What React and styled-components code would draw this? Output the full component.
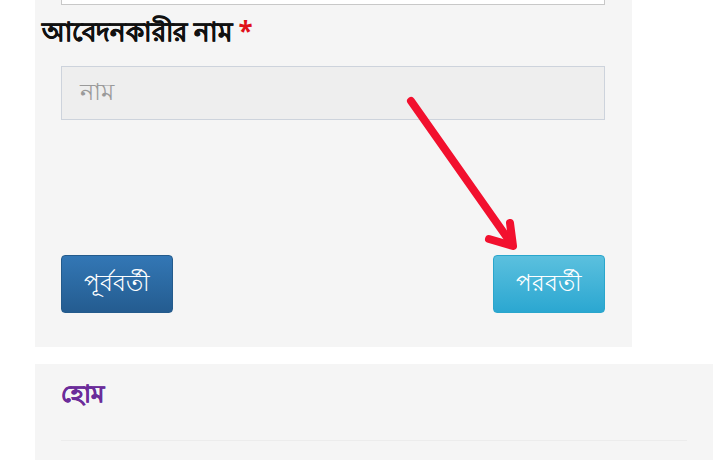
import React from "react";
import styled, { createGlobalStyle } from "styled-components";

const Global = createGlobalStyle`
  html, body { margin: 0; padding: 0; background: #fff; }
  body { font-family: "Noto Sans", "DejaVu Sans", sans-serif; width: 720px; height: 460px; overflow: hidden; }
`;

const Page = styled.div`
  position: relative;
  width: 720px;
  height: 460px;
  overflow: hidden;
  display: flex;
  flex-direction: column;
  gap: 17px;
`;

const FormPanel = styled.div`
  margin-left: 35px;
  width: 597px;
  height: 347px;
  background: #f5f5f5;
  box-sizing: border-box;
  padding: 0 27px 0 26px;
  display: flex;
  flex-direction: column;
`;

const TopInput = styled.div`
  height: 6px;
  margin-top: -1px;
  background: #fff;
  border: 1px solid #c8c8c8;
  border-top: none;
  box-sizing: border-box;
`;

const Label = styled.div`
  margin: 12px 0 0 -19px;
  font-size: 26px;
  font-weight: 700;
  color: #111;
  line-height: 28px;
  -webkit-text-stroke: 0.4px #111;
  & span { color: #e0101a; -webkit-text-stroke: 0; }
`;

const NameInput = styled.div`
  margin-top: 21px;
  height: 54px;
  box-sizing: border-box;
  background: #eeeeee;
  border: 1px solid #cdd3dc;
  padding: 0 18px;
  display: flex;
  align-items: center;
  font-size: 24px;
  color: #9a9a9a;
`;

const Buttons = styled.div`
  margin-top: 135px;
  display: flex;
  justify-content: space-between;
`;

const Btn = styled.div`
  width: 112px;
  height: 58px;
  box-sizing: border-box;
  border-radius: 4px;
  display: flex;
  align-items: center;
  justify-content: center;
  color: #fff;
  font-size: 23px;
  border: 1px solid ${p => (p.$variant === "info" ? "#2aa6cc" : "#245b8c")};
  background: ${p =>
    p.$variant === "info"
      ? "linear-gradient(#5bc0de, #2ba7d1)"
      : "linear-gradient(#3377b5, #245c90)"};
`;

const MenuPanel = styled.div`
  margin-left: 35px;
  width: 678px;
  flex: 1;
  background: #f5f5f5;
  box-sizing: border-box;
  padding: 15px 26px 0 26px;
`;

const MenuItem = styled.div`
  font-size: 24px;
  font-weight: 700;
  color: #6b2c9a;
  line-height: 28px;
  padding-bottom: 33px;
  border-bottom: 1px solid #ececec;
  -webkit-text-stroke: 0.4px #6b2c9a;
`;

const ArrowSvg = styled.svg`
  position: absolute;
  left: 0;
  top: 0;
  pointer-events: none;
`;

export default function App() {
  return (
    <>
      <Global />
      <Page>
        <FormPanel>
          <TopInput />
          <Label>
            আবেদনকারীর নাম <span>*</span>
          </Label>
          <NameInput>নাম</NameInput>
          <Buttons>
            <Btn $variant="primary">পূর্ববর্তী</Btn>
            <Btn $variant="info">পরবর্তী</Btn>
          </Buttons>
        </FormPanel>
        <MenuPanel>
          <MenuItem>হোম</MenuItem>
        </MenuPanel>
        <ArrowSvg width="720" height="460" viewBox="0 0 720 460">
          <g stroke="#f2102e" strokeWidth="8" strokeLinecap="round" strokeLinejoin="round" fill="none">
            <line x1="411" y1="101" x2="511" y2="243" />
            <polyline points="510,223 513,246 489,239" />
          </g>
        </ArrowSvg>
      </Page>
    </>
  );
}
